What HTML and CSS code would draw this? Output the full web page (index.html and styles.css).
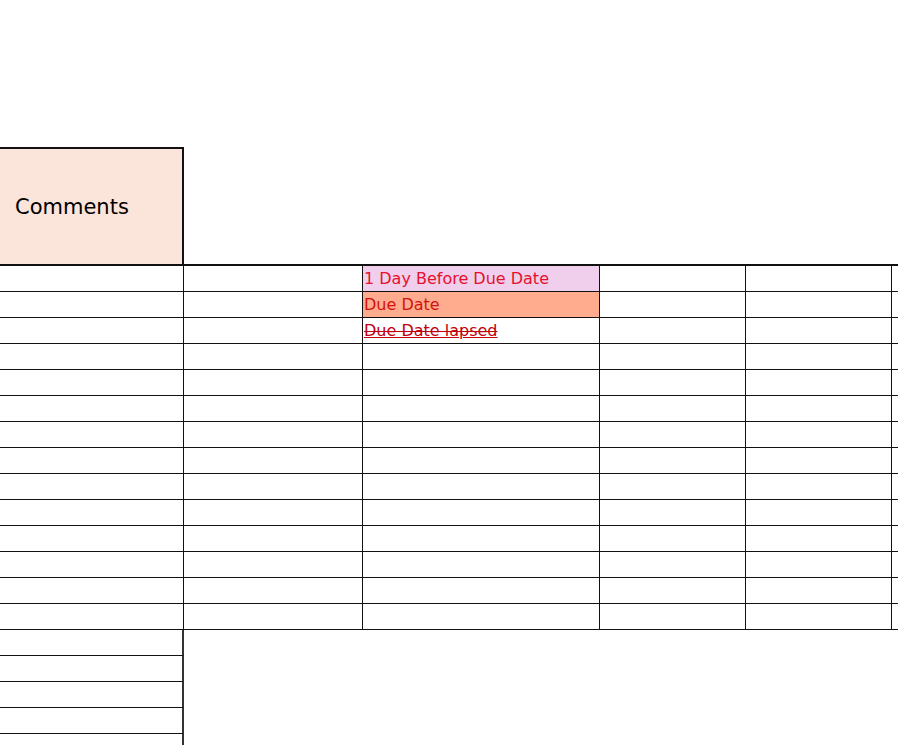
FILE: index.html
```html
<!DOCTYPE html>
<html lang="en">

<head>
    <meta charset="UTF-8">
    <title>Sheet</title>
    <link rel="stylesheet" href="styles.css">
</head>

<body>

    <div class="sheet">
        <div class="header-cell">Comments</div>

        <div class="grid">
            <div class="row">
                <div class="cell"></div>
                <div class="cell"></div>
                <div class="cell before-due">1 Day Before Due Date</div>
                <div class="cell"></div>
                <div class="cell"></div>
                <div class="cell"></div>
            </div>
            <div class="row">
                <div class="cell"></div>
                <div class="cell"></div>
                <div class="cell due">Due Date</div>
                <div class="cell"></div>
                <div class="cell"></div>
                <div class="cell"></div>
            </div>
            <div class="row">
                <div class="cell"></div>
                <div class="cell"></div>
                <div class="cell lapsed"><span>Due Date lapsed</span></div>
                <div class="cell"></div>
                <div class="cell"></div>
                <div class="cell"></div>
            </div>
            <div class="row"><div class="cell"></div><div class="cell"></div><div class="cell"></div><div class="cell"></div><div class="cell"></div><div class="cell"></div></div>
            <div class="row"><div class="cell"></div><div class="cell"></div><div class="cell"></div><div class="cell"></div><div class="cell"></div><div class="cell"></div></div>
            <div class="row"><div class="cell"></div><div class="cell"></div><div class="cell"></div><div class="cell"></div><div class="cell"></div><div class="cell"></div></div>
            <div class="row"><div class="cell"></div><div class="cell"></div><div class="cell"></div><div class="cell"></div><div class="cell"></div><div class="cell"></div></div>
            <div class="row"><div class="cell"></div><div class="cell"></div><div class="cell"></div><div class="cell"></div><div class="cell"></div><div class="cell"></div></div>
            <div class="row"><div class="cell"></div><div class="cell"></div><div class="cell"></div><div class="cell"></div><div class="cell"></div><div class="cell"></div></div>
            <div class="row"><div class="cell"></div><div class="cell"></div><div class="cell"></div><div class="cell"></div><div class="cell"></div><div class="cell"></div></div>
            <div class="row"><div class="cell"></div><div class="cell"></div><div class="cell"></div><div class="cell"></div><div class="cell"></div><div class="cell"></div></div>
            <div class="row"><div class="cell"></div><div class="cell"></div><div class="cell"></div><div class="cell"></div><div class="cell"></div><div class="cell"></div></div>
            <div class="row"><div class="cell"></div><div class="cell"></div><div class="cell"></div><div class="cell"></div><div class="cell"></div><div class="cell"></div></div>
            <div class="row"><div class="cell"></div><div class="cell"></div><div class="cell"></div><div class="cell"></div><div class="cell"></div><div class="cell"></div></div>
        </div>

        <div class="tail">
            <div class="tail-cell"></div>
            <div class="tail-cell"></div>
            <div class="tail-cell"></div>
            <div class="tail-cell"></div>
            <div class="tail-cell"></div>
        </div>
    </div>

</body>

</html>
```

FILE: styles.css
```css
:root {
    --line: #111111;
    --header-bg: #fbe4d9;
    --before-due-bg: #efcfec;
    --due-bg: #ffab8d;
    --font-family: "DejaVu Sans", "Liberation Sans", sans-serif;
}

html,
body {
    margin: 0;
    overflow: hidden;
    background: #ffffff;
}

body {
    font-family: var(--font-family);
    color: #000000;
}

.sheet {
    padding-top: 147px;
    width: 898px;
    height: 745px;
    box-sizing: border-box;
    overflow: hidden;
}

.header-cell {
    box-sizing: border-box;
    width: 184px;
    height: 117px;
    padding-left: 15px;
    padding-top: 1px;
    display: flex;
    align-items: center;
    background: var(--header-bg);
    border-top: 2px solid var(--line);
    border-right: 2px solid var(--line);
    font-size: 21px;
}

.grid {
    border-top: 2px solid var(--line);
}

.row {
    display: grid;
    grid-template-columns: 184px 179px 237px 146px 146px 6px;
    height: 26px;
}

.cell {
    box-sizing: border-box;
    border-right: 1px solid var(--line);
    border-bottom: 1px solid var(--line);
    padding-left: 1px;
    font-size: 16px;
    line-height: 25px;
    white-space: nowrap;
}

.row .cell:last-child {
    border-right: none;
}

.before-due {
    background: var(--before-due-bg);
    color: #e6102c;
}

.due {
    background: var(--due-bg);
    color: #d2130e;
}

.lapsed span {
    color: #c0000e;
    text-decoration: underline line-through;
    text-decoration-thickness: 1px;
}

.tail-cell {
    box-sizing: border-box;
    width: 184px;
    height: 26px;
    border-right: 2px solid #333333;
    border-bottom: 1px solid var(--line);
}
```
